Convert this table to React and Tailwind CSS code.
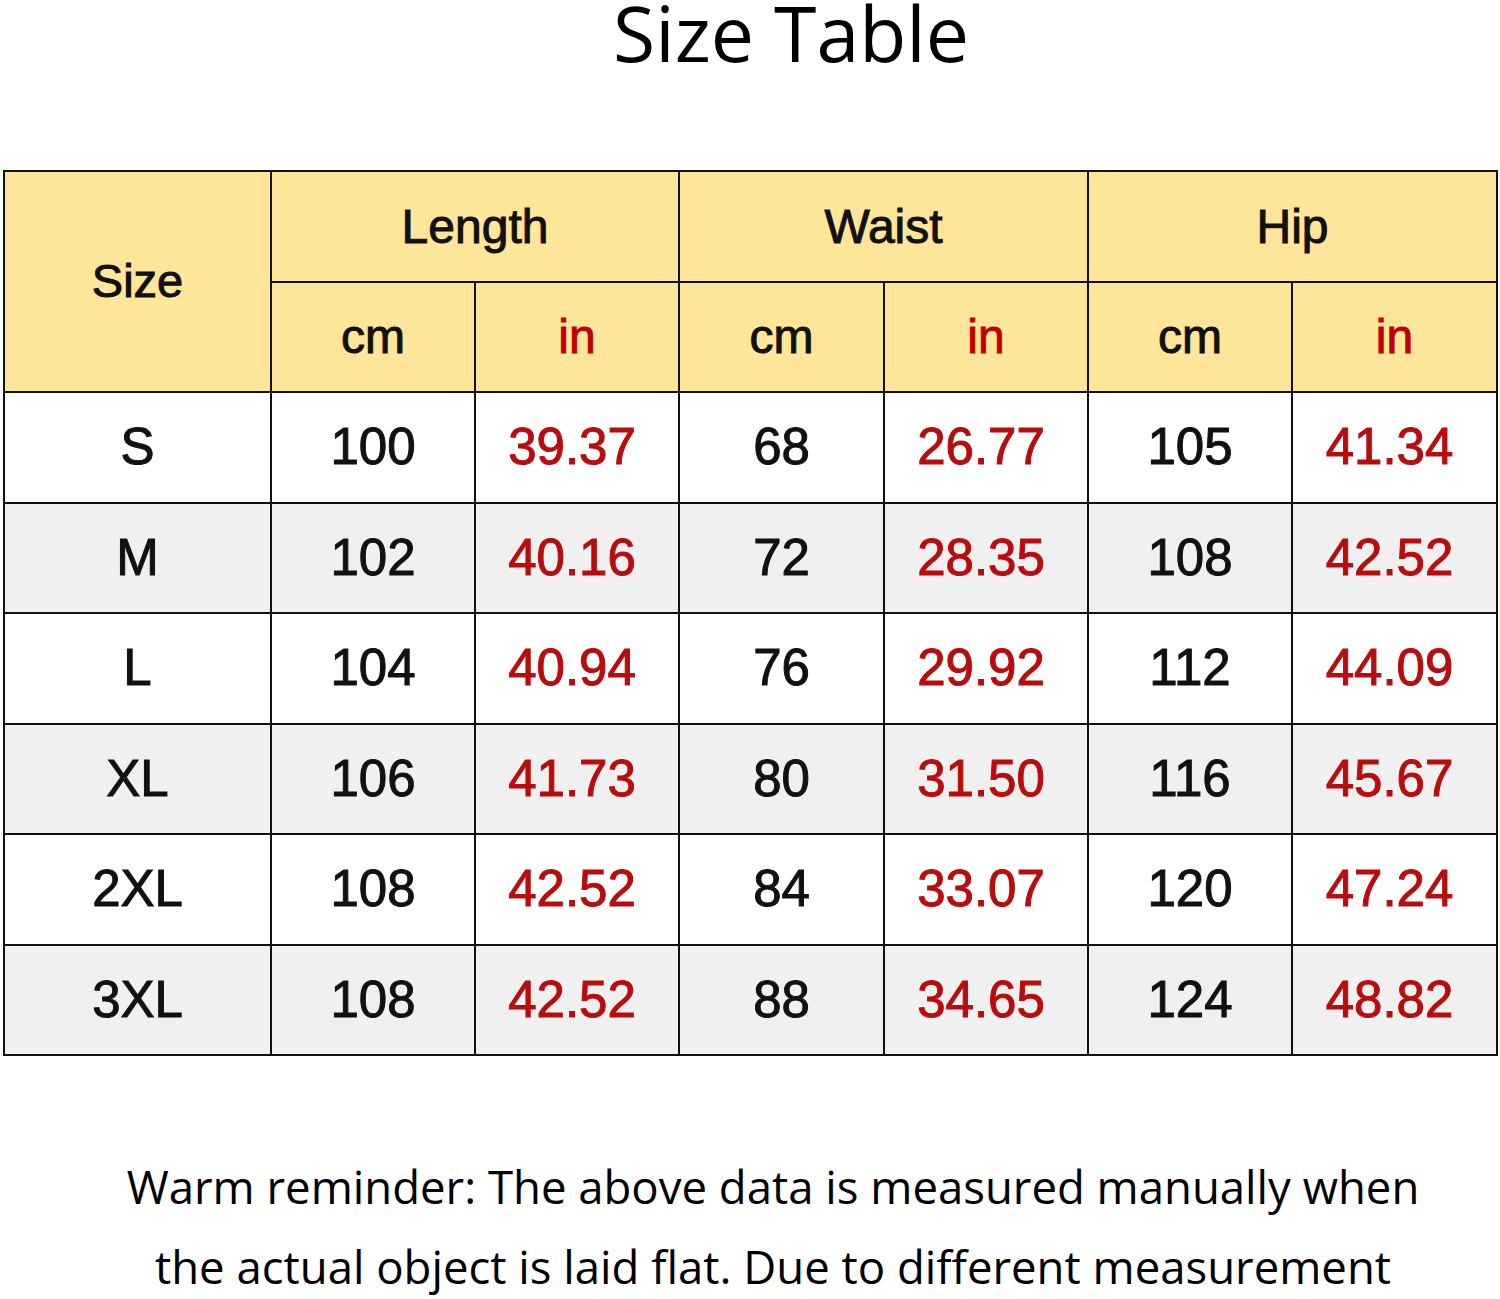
import React from 'react';

// size chart rows: [size, length cm, length in, waist cm, waist in, hip cm, hip in]
const ROWS = [
    ['S', '100', '39.37', '68', '26.77', '105', '41.34'],
    ['M', '102', '40.16', '72', '28.35', '108', '42.52'],
    ['L', '104', '40.94', '76', '29.92', '112', '44.09'],
    ['XL', '106', '41.73', '80', '31.50', '116', '45.67'],
    ['2XL', '108', '42.52', '84', '33.07', '120', '47.24'],
    ['3XL', '108', '42.52', '88', '34.65', '124', '48.82'],
];

const cell = 'border-2 border-[#111] text-center align-middle p-0';
const tableFont = { fontFamily: '"Liberation Sans", Arial, sans-serif' };

const App = () => {
    return (
        <div className="w-[1500px] h-[1299px] bg-white overflow-hidden">
            <h1
                className="text-center text-[77px] leading-none text-black pl-[82px] h-[176px] -mt-[6px]"
                style={{ fontFamily: '"Open Sans", "Noto Sans", sans-serif' }}
            >
                Size Table
            </h1>

            <div className="pl-[3px] pr-[4px]">
                <table
                    className="w-[1493px] border-collapse table-fixed text-[#111] text-[51px] [-webkit-text-stroke:1px]"
                    style={tableFont}
                >
                    <colgroup>
                        <col className="w-[267px]" />
                        <col className="w-[204px]" />
                        <col className="w-[204px]" />
                        <col className="w-[205px]" />
                        <col className="w-[204px]" />
                        <col className="w-[204px]" />
                        <col className="w-[205px]" />
                    </colgroup>
                    <thead className="bg-[#fde699]">
                        <tr className="h-[111px]">
                            <th rowSpan={2} className={`${cell} font-normal text-[47px]`}>Size</th>
                            <th colSpan={2} className={`${cell} font-normal text-[48px]`}>Length</th>
                            <th colSpan={2} className={`${cell} font-normal text-[48px]`}>Waist</th>
                            <th colSpan={2} className={`${cell} font-normal text-[48px]`}>Hip</th>
                        </tr>
                        <tr className="h-[110px]">
                            {['cm', 'in', 'cm', 'in', 'cm', 'in'].map((u, i) => (
                                <th
                                    key={i}
                                    className={`${cell} font-normal text-[48px] ${u === 'in' ? 'text-[#c00000]' : ''}`}
                                >
                                    {u}
                                </th>
                            ))}
                        </tr>
                    </thead>
                    <tbody>
                        {ROWS.map((row, r) => (
                            <tr key={row[0]} className={`h-[110.5px] ${r % 2 ? 'bg-[#f0f0f0]' : 'bg-white'}`}>
                                {row.map((v, i) => (
                                    <td
                                        key={i}
                                        className={`${cell} ${i > 0 && i % 2 === 0 ? 'text-[#b80d0d] pr-[10px]' : ''}`}
                                    >
                                        {v}
                                    </td>
                                ))}
                            </tr>
                        ))}
                    </tbody>
                </table>
            </div>

            <div
                className="pt-[90px] pl-[46px] text-center text-[45.5px] leading-[80px] text-black"
                style={{ fontFamily: '"Open Sans", "Noto Sans", sans-serif' }}
            >
                <p>Warm reminder: The above data is measured manually when</p>
                <p>the actual object is laid flat. Due to different measurement</p>
            </div>
        </div>
    );
};

export default App;
